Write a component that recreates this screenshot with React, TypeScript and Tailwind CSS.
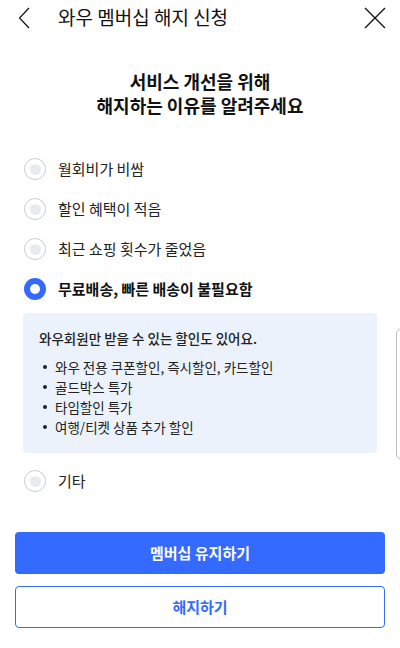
const reasons = [
  "월회비가 비쌈",
  "할인 혜택이 적음",
  "최근 쇼핑 횟수가 줄었음",
  "무료배송, 빠른 배송이 불필요함",
];

const benefits = [
  "와우 전용 쿠폰할인, 즉시할인, 카드할인",
  "골드박스 특가",
  "타임할인 특가",
  "여행/티켓 상품 추가 할인",
];

function Radio({ checked }: { checked: boolean }) {
  if (checked) {
    return (
      <span className="flex h-[22px] w-[22px] shrink-0 items-center justify-center rounded-full bg-[#346aff]">
        <span className="h-[10px] w-[10px] rounded-full bg-white" />
      </span>
    );
  }
  return (
    <span className="flex h-[22px] w-[22px] shrink-0 items-center justify-center rounded-full border border-[#c9cdd2] bg-white">
      <span className="h-[11px] w-[11px] rounded-full bg-[#e8eaed]" />
    </span>
  );
}

function ReasonRow({ label, checked }: { label: string; checked: boolean }) {
  return (
    <div className="flex h-[40px] items-center gap-[12px] px-[24px]">
      <Radio checked={checked} />
      <span
        className={
          checked
            ? "text-[15px] font-bold text-[#111]"
            : "text-[15px] text-[#222]"
        }
      >
        {label}
      </span>
    </div>
  );
}

export default function App() {
  const selected = 3;
  return (
    <div
      className="relative h-[648px] w-[400px] overflow-hidden bg-white"
      style={{ fontFamily: '"Noto Sans CJK KR", "Noto Sans", sans-serif' }}
    >
      <div className="flex h-[35px] items-center px-[16px]">
        <svg width="14" height="22" viewBox="0 0 14 22" className="ml-[2px]">
          <path d="M11 1 L1.5 11 L11 21" fill="none" stroke="#111" strokeWidth="1.2" />
        </svg>
        <div className="ml-[26px] text-[19px] text-[#111]">와우 멤버십 해지 신청</div>
        <svg width="22" height="22" viewBox="0 0 22 22" className="ml-auto mr-[-2px]">
          <path d="M1 1 L21 21 M21 1 L1 21" fill="none" stroke="#111" strokeWidth="1.3" />
        </svg>
      </div>

      <div className="mt-[34px] text-center text-[18px] font-bold leading-[24px] text-[#111]">
        서비스 개선을 위해
        <br />
        해지하는 이유를 알려주세요
      </div>

      <div className="mt-[32px] flex flex-col">
        {reasons.map((r, i) => (
          <ReasonRow key={i} label={r} checked={i === selected} />
        ))}
      </div>

      <div className="mx-[23px] mt-[4px] rounded-[4px] bg-[#ebf2fc] px-[16px] pb-[16px] pt-[14px] text-[13.5px] text-[#222]">
        <div className="font-medium leading-[22px]">와우회원만 받을 수 있는 할인도 있어요.</div>
        <ul className="mt-[8px] flex flex-col">
          {benefits.map((b, i) => (
            <li key={i} className="flex h-[20px] items-center gap-[8px] pl-[4px]">
              <span className="h-[4px] w-[4px] rounded-full bg-[#222]" />
              {b}
            </li>
          ))}
        </ul>
      </div>

      <div className="mt-[8px]">
        <ReasonRow label="기타" checked={false} />
      </div>

      <div className="mx-[15px] mt-[31px] flex flex-col gap-[12px]">
        <button className="h-[42px] rounded-[4px] bg-[#346aff] text-[15px] font-bold text-white">
          멤버십 유지하기
        </button>
        <button className="h-[42px] rounded-[4px] border border-[#346aff] bg-white text-[15px] font-bold text-[#346aff]">
          해지하기
        </button>
      </div>

      <div className="absolute left-[396px] top-[328px] h-[132px] w-[20px] rounded-[6px] border border-[#bdbdbd]" />
    </div>
  );
}
